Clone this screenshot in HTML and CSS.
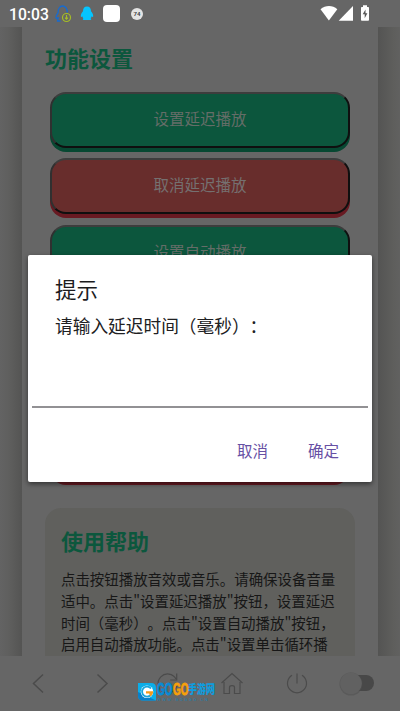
FILE: index.html
```html
<!DOCTYPE html>
<html lang="zh-CN">
<head>
<meta charset="utf-8">
<title>功能设置</title>
<link rel="stylesheet" href="styles.css">
</head>
<body>
<div class="phone">
  <header class="status">
    <span class="clock">10:03</span>
    <svg class="s-qq" width="18" height="18" viewBox="0 0 18 18"><path d="M5.500 16H2.500C2.700 14.500 3 13.500 3.300 12.800 2.500 12.500 1.500 13.800 1 13 .8 11 1.800 9.200 3 8 2.800 4 4.800 1 7.500 1S12.500 3.500 12.200 7.500" fill="none" stroke="#176bd0" stroke-width="1.300"/><circle cx="11.500" cy="12.500" r="4" fill="#666" stroke="#a5bd27" stroke-width="1.200"/><path d="M11.500 10v4M10 12.700l1.500 1.600 1.500-1.600" fill="none" stroke="#a5bd27" stroke-width="1.100"/></svg>
    <svg class="s-bird" width="14" height="15" viewBox="0 0 14 15"><path d="M7 .5C4.300.5 3 2.500 3 5.300 1.500 7 .7 8.700.8 10.600c.2.700 1 .3 1.500-.3.200.9.600 1.500 1.100 2-.8.500-.8 1.700.2 1.700h6.800c1 0 1-1.200.2-1.700.5-.5.900-1.100 1.100-2 .5.600 1.300 1 1.500.3.100-1.900-.7-3.600-2.200-5.300C11 2.500 9.700.5 7 .5z" fill="#05c5ff"/></svg>
    <span class="s-app"></span>
    <span class="s-round">74</span>
    <svg class="s-right" width="50" height="17" viewBox="0 0 50 17"><path d="M.5 4.200C5.500-.1 12.500-.1 17.300 4.200L8.900 15.500z" fill="#fff"/><path d="M33 1v14.800H18.700z" fill="#fff"/><path d="M43 .3h4v1.600h1.200c.5 0 .8.400.8.900v12c0 .5-.3.900-.8.900h-6.400c-.5 0-.8-.4-.8-.9v-12c0-.5.300-.9.800-.9H43z" fill="#fff"/><path d="M45.500 4.500l-2.800 4.800h2v4l2.700-5h-1.900z" fill="#555"/></svg>
  </header>
  <main class="page">
    <section class="card">
      <h2>功能设置</h2>
      <div class="buttons">
        <div class="btn">设置延迟播放</div>
        <div class="btn red">取消延迟播放</div>
        <div class="btn">设置自动播放</div>
        <div class="btn red"></div>
        <div class="btn"></div>
        <div class="btn red"></div>
      </div>
      <article class="help">
        <h2>使用帮助</h2>
        <p>点击按钮播放音效或音乐。请确保设备音量<br>适中。点击"设置延迟播放"按钮，设置延迟<br>时间（毫秒）。点击"设置自动播放"按钮，<br>启用自动播放功能。点击"设置单击循环播</p>
      </article>
    </section>
  </main>
  <nav class="nav">
    <svg width="400" height="55" viewBox="0 0 400 55" fill="none" stroke="#4b4b4b" stroke-width="1.500">
      <path d="M43 18.500L33.500 27.500 43 36.500M97.500 18.500L107 27.500 97.500 36.500"/>
      <path d="M176 23A9.500 9.500 0 1 0 177 29M176.700 17.500V24h-6.500" stroke-width="1.200"/>
      <path d="M221.500 27L232 17.500 242.500 27M224 26v11.500h5.500v-6q0-1.800 2.500-1.800t2.500 1.800v6h5.500V26" stroke-width="1.200"/>
      <path d="M292 19.200a9.500 9.500 0 1 0 10 0M297 17.500v10" stroke-width="1.200"/>
      <rect x="350" y="19" width="24" height="16" rx="8" fill="#484848" stroke="none"/>
      <circle cx="351" cy="28" r="11.500" fill="#505050" stroke="none" opacity=".55"/>
      <circle cx="351" cy="27.300" r="10.800" fill="#616161" stroke="none"/>
    </svg>
    <div class="mark">
      <svg width="18" height="18" viewBox="0 0 18 18"><path d="M0 0h13q5 0 5 5v12.500H5q-5 0-5-5z" fill="#0baee9"/><path d="M0 9l18 8.500H5q-5 0-5-5z" fill="#087fc9"/><circle cx="9" cy="8.800" r="6.300" fill="#fff"/><path d="M13 5.500A5 5 0 1 0 13.500 11" fill="none" stroke="#18a5dc" stroke-width="1.800"/><path d="M8 8.200h7.200q0 3.500-3 5.300l-1-3H8z" fill="#f39a1c"/></svg>
      <div class="mark-text">
        <div class="mark-name"><b class="go1">GO</b><b class="go2">GO</b><b class="cn">手游网</b></div>
        <div class="mark-url">WWW.GOGGO.CN</div>
      </div>
    </div>
  </nav>
  <div class="dialog">
    <h3>提示</h3>
    <p>请输入延迟时间（毫秒）：</p>
    <div class="field"></div>
    <div class="actions"><span>取消</span><span>确定</span></div>
  </div>
</div>
</body>
</html>
```

FILE: styles.css
```css
* { box-sizing: border-box; }
body, h2, h3, p { margin: 0; }
body { font-family: Roboto, "Noto Sans CJK SC", sans-serif; background: #666; text-spacing-trim: space-all; }
.phone { position: relative; width: 400px; height: 711px; display: flex; flex-direction: column; overflow: hidden; background: #666; }

.status { height: 27px; flex: none; display: flex; align-items: center; padding: 0 30px 0 9px; }
.clock { width: 46px; font-size: 15.700px; font-weight: 500; line-height: 27px; color: #fff; white-space: nowrap; padding-top: 1px; }
.s-qq { margin-top: 1px; }
.s-bird { margin-left: 7px; }
.s-app { width: 17px; height: 17px; margin-left: 9px; border-radius: 4px; background: #fff; }
.s-round { width: 12px; height: 12px; margin-left: 11px; border-radius: 50%; background: #e4e4e4; color: #444; font-size: 6px; font-weight: 700; line-height: 12px; text-align: center; }
.s-right { margin-left: auto; }

.page { height: 629px; flex: none; overflow: hidden; padding: 0 22px; background: linear-gradient(90deg, #636363 0, #5f5f5e 9px, #545453 22px, #545453 378px, #5e5e5c 393px, #616160 400px); }
.card { height: 629px; padding: 12px 23px 0; background: #666; }
h2 { font-family: "Noto Sans CJK SC", sans-serif; font-size: 22px; line-height: 36px; font-weight: 700; color: #0c573d; }
.buttons { display: flex; flex-direction: column; gap: 10.700px; padding: 16.700px 5px 0; }
.btn { height: 56px; border: 2px solid; border-color: #3d3d3d #0f0f0f #0f0f0f #303030; border-radius: 16px; background: #0c563d; box-shadow: 0 4px 0 #074832; color: #656d68; font-size: 15.500px; line-height: 53px; text-align: center; }
.red { background: #682d2c; box-shadow: 0 4px 0 #681a22; color: #757070; }
.help { margin-top: 27px; height: 148px; padding: 14px 16px 0; border-radius: 16px 16px 0 0; background: #60605d; }
.help p { margin-top: 10px; font-family: "Noto Sans CJK SC", sans-serif; font-size: 14.450px; line-height: 21.700px; color: #171717; white-space: nowrap; }

.nav { position: relative; height: 55px; flex: none; background: #666; }
.nav > svg { display: block; }
.mark { position: absolute; left: 138px; top: 27px; display: flex; }
.mark-text { margin-left: 1px; }
.mark-name { display: flex; height: 14px; line-height: 14px; white-space: nowrap; }
.go1, .go2 { font-family: "Liberation Sans", sans-serif; font-size: 16px; width: 15.500px; transform: scaleX(.62); transform-origin: 0 50%; -webkit-text-stroke: .8px; }
.go1 { color: #078bd6; }
.go2 { color: #f7a00a; }
.cn { width: 27px; font-size: 12.500px; font-weight: 900; color: #0e9ddf; transform: scaleX(.72); transform-origin: 0 50%; }
.mark-url { margin-top: 1px; font-size: 4px; line-height: 4px; letter-spacing: 1.750px; color: #1782b4; white-space: nowrap; }

.dialog { position: absolute; left: 28px; top: 255px; width: 344px; height: 227px; padding: 20px 4px 0; border-radius: 2px; background: #fff; box-shadow: 0 2px 5px rgba(0, 0, 0, .5); }
.dialog h3 { padding-left: 23px; font-size: 21.500px; font-weight: 400; line-height: 32px; color: #1c1c1e; }
.dialog p { padding-left: 23px; margin-top: 7px; font-size: 17.700px; line-height: 27px; color: #202022; white-space: nowrap; }
.field { height: 67px; border-bottom: 2px solid #929194; }
.actions { display: flex; justify-content: flex-end; gap: 40px; margin-top: 32px; padding-right: 29px; font-size: 15.500px; line-height: 24px; color: #6750a4; }
```
